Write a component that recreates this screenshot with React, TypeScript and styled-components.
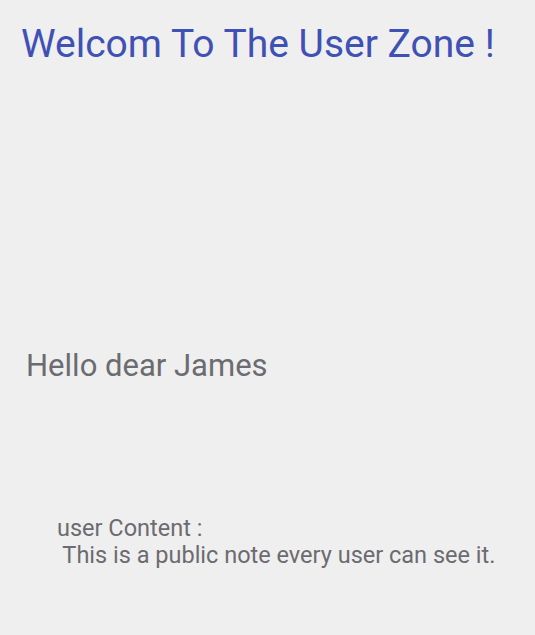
import React from "react";
import styled, { createGlobalStyle } from "styled-components";

const Global = createGlobalStyle`
  html, body { margin: 0; padding: 0; background: #efefef; }
  body { font-family: Roboto, "Noto Sans", sans-serif; }
`;

const Page = styled.div`
  box-sizing: border-box;
  width: 535px;
  min-height: 635px;
  background: #efefef;
  padding: 18px 22px 0 21px;
  display: flex;
  flex-direction: column;
`;

const Title = styled.h1`
  margin: 0;
  font-family: Roboto, sans-serif;
  font-weight: 400;
  font-size: 39px;
  line-height: 52px;
  color: #3f51b5;
  white-space: nowrap;
`;

const Greeting = styled.h2`
  margin: 276px 0 0 5px;
  font-family: Roboto, sans-serif;
  font-weight: 400;
  font-size: 31px;
  line-height: 40px;
  color: #6b6b70;
`;

const Content = styled.div`
  margin: 129px 0 0 36px;
  font-family: Roboto, sans-serif;
  font-size: 23.5px;
  line-height: 26.5px;
  color: #6b6b70;
  white-space: pre;
`;

export default function App() {
  return (
    <>
      <Global />
      <Page>
        <Title>Welcom To The User Zone !</Title>
        <Greeting>Hello dear James</Greeting>
        <Content>{"user Content :\n This is a public note every user can see it."}</Content>
      </Page>
    </>
  );
}
